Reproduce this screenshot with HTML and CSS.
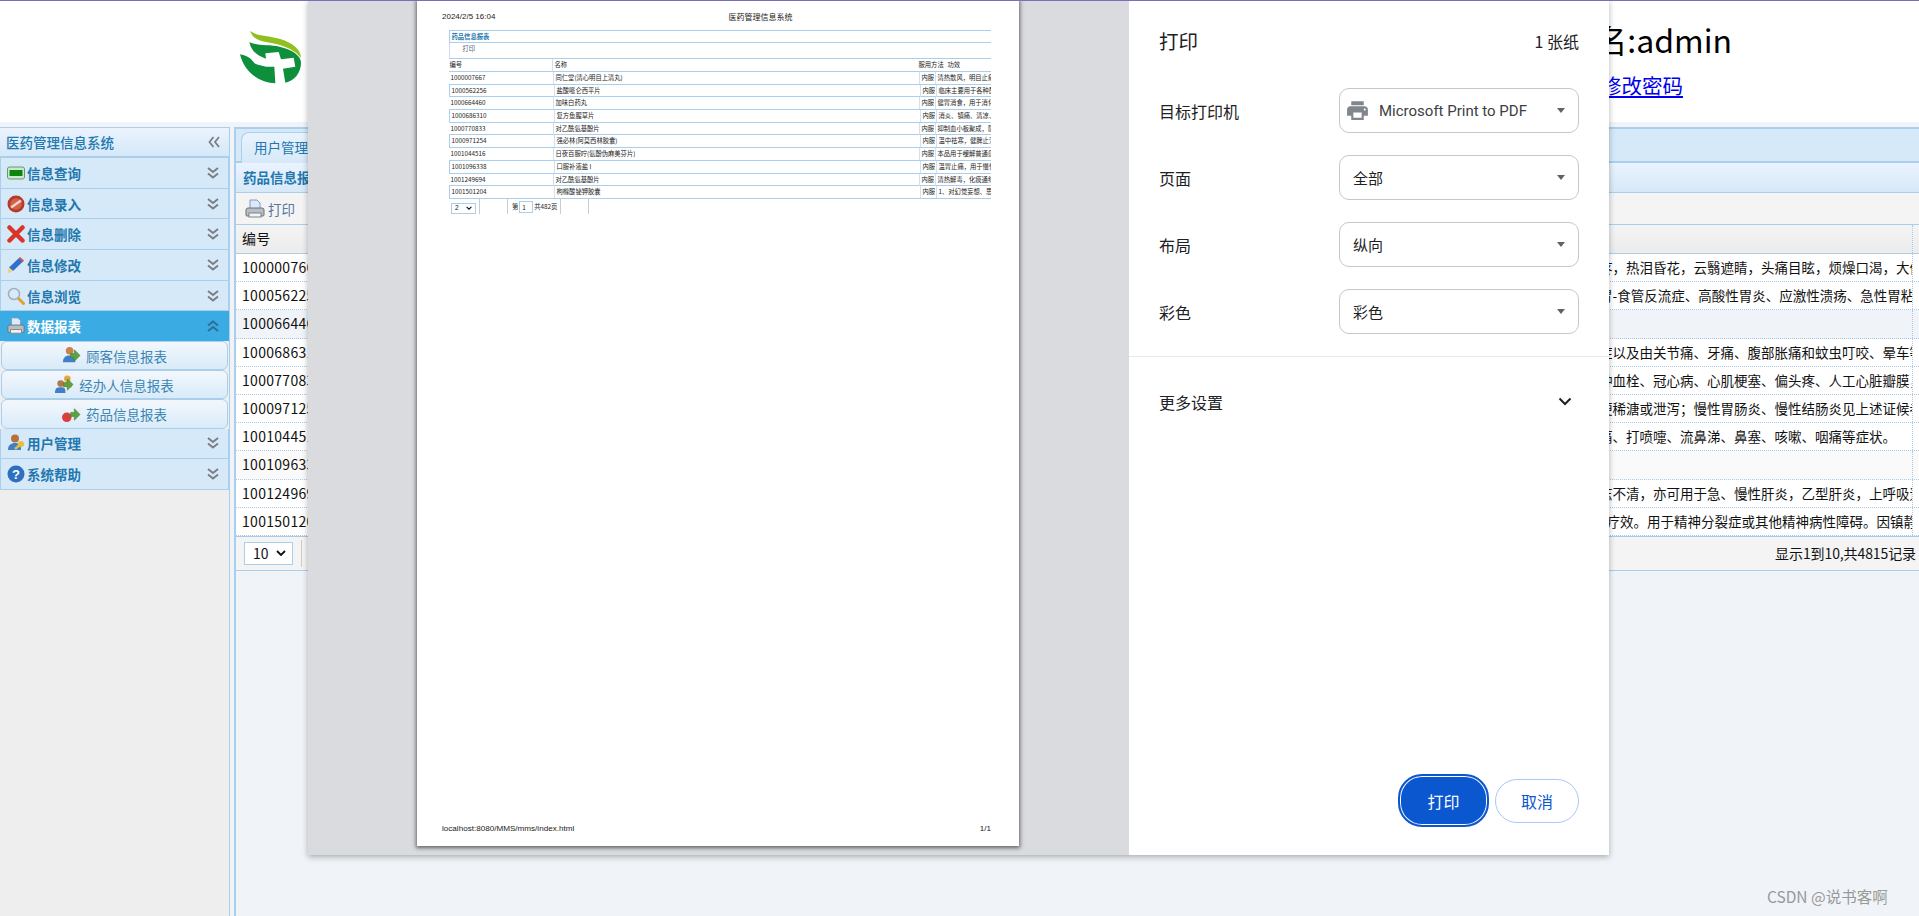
FILE: index.html
```html
<!DOCTYPE html>
<html lang="zh-CN">
<head>
<meta charset="utf-8">
<title>医药管理信息系统</title>
<link rel="stylesheet" href="styles.css">
</head>
<body>
<svg class="defs" width="0" height="0" aria-hidden="true">
  <defs>
    <symbol id="dbl-down" viewBox="0 0 12 12"><path d="M1 1l5 4 5-4M1 6.500l5 4 5-4" fill="none" stroke="#7a7f85" stroke-width="2"/></symbol>
    <symbol id="dbl-up" viewBox="0 0 12 12"><path d="M1 5.500l5-4 5 4M1 11l5-4 5 4" fill="none" stroke="#2c6f95" stroke-width="2"/></symbol>
    <symbol id="dbl-left" viewBox="0 0 12 12"><path d="M5.500 1l-4 5 4 5M11 1L7 6l4 5" fill="none" stroke="#7a7f85" stroke-width="1.800"/></symbol>
    <symbol id="printer" viewBox="0 0 20 20"><path d="M5 1h7l3 3v6H5z" fill="#dbe9f8" stroke="#7e9cc4"/><path d="M3 9h14a2 2 0 0 1 2 2v5a1 1 0 0 1-1 1H2a1 1 0 0 1-1-1v-5a2 2 0 0 1 2-2z" fill="#b9bdc4" stroke="#6d7278"/><rect x="4" y="14" width="12" height="4" fill="#f3f4f6" stroke="#7f8389"/></symbol>
    <symbol id="arrow" viewBox="0 0 20 20"><path d="M9 8h4V4l6 6-6 6v-4H9z" fill="#5da144" stroke="#3f7f2c" stroke-width=".6"/></symbol>
  </defs>
</svg>

<header class="site-head">
  <svg class="logo" viewBox="0 0 216 192" aria-hidden="true">
    <path d="M42 14C60 30 95 28 130 38c40 12 65 32 65 58C180 75 150 60 110 52 80 47 52 44 42 14z" fill="#8fc01e"/>
    <path d="M40 48c20 12 60 7 90 14 40 8 65 28 65 48 0 30-20 55-47 60l-7-42 37-6-5-27-38 5-7-22-40 4 2 16C65 90 45 75 40 48z" fill="#0d8f3c"/>
    <path d="M12 85c18 3 30 10 38 20 10 13 12 10 40 17l25 0 3 50C70 170 25 140 12 85z" fill="#0d8f3c"/>
  </svg>
  <div class="user-box">
    <div class="user-name">用户名:admin</div>
    <a class="user-link" href="#">修改密码</a>
  </div>
</header>

<div class="workspace">
  <aside class="side">
    <div class="side-title"><span>医药管理信息系统</span><svg class="chev"><use href="#dbl-left"/></svg></div>
    <div class="nav-row">
      <svg class="nav-ico" viewBox="0 0 18 18"><rect x=".5" y="3" width="17" height="12" rx="2" fill="#cfe6d0" stroke="#5c9c6c"/><rect x="2.500" y="6" width="13" height="6" fill="#0a860f"/></svg>
      <span>信息查询</span><svg class="chev"><use href="#dbl-down"/></svg>
    </div>
    <div class="nav-row">
      <svg class="nav-ico" viewBox="0 0 18 18"><circle cx="9" cy="9" r="8.500" fill="#b53a28"/><circle cx="9" cy="9" r="5.800" fill="#d2614c"/><path d="M4 12.500L14 5.500" stroke="#f3d3cb" stroke-width="2.500"/></svg>
      <span>信息录入</span><svg class="chev"><use href="#dbl-down"/></svg>
    </div>
    <div class="nav-row">
      <svg class="nav-ico" viewBox="0 0 18 18"><path d="M2.500 2.500l13 13M15.500 2.500l-13 13" stroke="#d9362b" stroke-width="4.500" stroke-linecap="round"/></svg>
      <span>信息删除</span><svg class="chev"><use href="#dbl-down"/></svg>
    </div>
    <div class="nav-row">
      <svg class="nav-ico" viewBox="0 0 18 18"><path d="M12.500 1.500l4 3.500L6 15l-4-3.500z" fill="#2f6fd0"/><path d="M13 1l4 3.500-1.500 1.500-4-3.500z" fill="#d9534a"/><path d="M2 11.500L6 15l-5.500 2.500z" fill="#f2cf7a"/></svg>
      <span>信息修改</span><svg class="chev"><use href="#dbl-down"/></svg>
    </div>
    <div class="nav-row">
      <svg class="nav-ico" viewBox="0 0 18 18"><path d="M10.500 10.500l6 6" stroke="#e0a030" stroke-width="3" stroke-linecap="round"/><circle cx="7" cy="7" r="5.500" fill="#d8ebfa" stroke="#a5aeb8" stroke-width="1.500"/></svg>
      <span>信息浏览</span><svg class="chev"><use href="#dbl-down"/></svg>
    </div>
    <div class="nav-row nav-active">
      <svg class="nav-ico"><use href="#printer"/></svg>
      <span>数据报表</span><svg class="chev"><use href="#dbl-up"/></svg>
    </div>
    <a class="sub-row"><svg class="sub-ico" viewBox="0 0 20 20"><circle cx="8" cy="5" r="4" fill="#c9824a"/><path d="M1 17c0-5 3-7 7-7s6 2 6 7z" fill="#3f7fc8"/><use href="#arrow"/></svg><span>顾客信息报表</span></a>
    <a class="sub-row"><svg class="sub-ico" viewBox="0 0 20 20"><circle cx="13" cy="4" r="3.500" fill="#e5a93f"/><path d="M8 13c0-4 2-5 5-5s5 1 5 5z" fill="#e5a93f"/><circle cx="6" cy="9" r="3.500" fill="#b9744a"/><path d="M0 19c0-5 2-6 6-6s5 1 5 6z" fill="#3f7fc8"/><use href="#arrow"/></svg><span>经办人信息报表</span></a>
    <a class="sub-row"><svg class="sub-ico" viewBox="0 0 20 20"><path d="M6 9l7-6a4 4 0 0 1 5 6l-7 6z" fill="#eceff2"/><circle cx="5" cy="13" r="5" fill="#dc3d3d"/><use href="#arrow"/></svg><span>药品信息报表</span></a>
    <div class="nav-row">
      <svg class="nav-ico" viewBox="0 0 18 18"><circle cx="8" cy="4.500" r="4" fill="#b8703c"/><path d="M1 16c0-5 3-7 7-7s6 2 6 7z" fill="#3f7fc8"/><path d="M8 15l6-5" stroke="#e9bc3c" stroke-width="2.500"/><circle cx="14" cy="10" r="3" fill="#e9bc3c"/></svg>
      <span>用户管理</span><svg class="chev"><use href="#dbl-down"/></svg>
    </div>
    <div class="nav-row">
      <svg class="nav-ico" viewBox="0 0 18 18"><circle cx="9" cy="9" r="8.500" fill="#2f6fc0"/><text x="9" y="14" text-anchor="middle" class="help-mark">?</text></svg>
      <span>系统帮助</span><svg class="chev"><use href="#dbl-down"/></svg>
    </div>
  </aside>

  <main class="main">
    <div class="tabs"><div class="tab">用户管理</div></div>
    <div class="panel-title">药品信息报表</div>
    <div class="toolbar"><svg class="tool-ico"><use href="#printer"/></svg><span>打印</span></div>
    <div class="dt-row dt-head"><div>编号</div><div>名称</div><div>服用方法</div><div>功效</div></div>
    <div class="dt-row"><div>1000007667</div><div>同仁堂(清心明目上清丸)</div><div>内服</div><div>清热散风，明目止痛。用于风热上攻，目赤疼，热泪昏花，云翳遮睛，头痛目眩，烦燥口渴，大便秘结</div></div>
    <div class="dt-row"><div>1000562256</div><div>盐酸哌仑西平片</div><div>内服</div><div>临床主要用于治疗各种酸相关性疾病，例如胃-食管反流症、高酸性胃炎、应激性溃疡、急性胃粘膜损伤</div></div>
    <div class="dt-row dt-tint"><div>1000664460</div><div>加味白药丸</div><div>内服</div><div>健胃消食，用于消化不良。</div></div>
    <div class="dt-row"><div>1000686310</div><div>复方鱼腥草片</div><div>内服</div><div>消炎、镇痛、清凉、止痒。用于感冒头痛等症以及由关节痛、牙痛、腹部胀痛和蚊虫叮咬、晕车等引起的不适</div></div>
    <div class="dt-row"><div>1000770833</div><div>对乙酰氨基酚片</div><div>内服</div><div>抑制血小板聚集，防治动脉粥样硬化及其各种血栓、冠心病、心肌梗塞、偏头疼、人工心脏瓣膜，</div></div>
    <div class="dt-row"><div>1000971254</div><div>强必林(阿莫西林胶囊)</div><div>内服</div><div>温中祛寒，健脾止泻。用于脾胃虚寒所致大便稀溏或泄泻；慢性胃肠炎、慢性结肠炎见上述证候者</div></div>
    <div class="dt-row"><div>1001044516</div><div>日夜百服咛(氨酚伪麻美芬片)</div><div>内服</div><div>本品用于缓解普通感冒或流行性感冒引起头痛、打喷嚏、流鼻涕、鼻塞、咳嗽、咽痛等症状。</div></div>
    <div class="dt-row dt-pale"><div>1001096338</div><div>口服补液盐 I</div><div>内服</div><div>温胃止痛，用于慢性胃炎。</div></div>
    <div class="dt-row"><div>1001249694</div><div>对乙酰氨基酚片</div><div>内服</div><div>清热解毒，化痰通络。用于热病痰热内扰神志不清，亦可用于急、慢性肝炎，乙型肝炎，上呼吸道感染</div></div>
    <div class="dt-row"><div>1001501204</div><div>枸橼酸铋钾胶囊</div><div>内服</div><div>1、对幻觉妄想、思维障碍、情感淡漠等有良疗效。用于精神分裂症或其他精神病性障碍。因镇静作用</div></div>
    <div class="pager">
      <div class="page-size"><span>10</span><svg class="size-caret" viewBox="0 0 10 6"><path d="M1 1l4 4 4-4" fill="none" stroke="#111" stroke-width="1.800"/></svg></div>
      <div class="pager-sep"></div>
      <div class="pager-info">显示1到10,共4815记录</div>
    </div>
  </main>
</div>

<section class="print-dialog">
  <div class="preview">
    <div class="paper">
      <div class="paper-head"><span class="paper-date">2024/2/5 16:04</span><span class="paper-title">医药管理信息系统</span></div>
      <div class="pt">
        <div class="pt-title">药品信息报表</div>
        <div class="pt-tool"><span>打印</span></div>
        <div class="pt-head"><span>编号</span><span>名称</span><span>服用方法</span><span>功效</span></div>
        <div class="pt-row"><span>1000007667</span><span>同仁堂(清心明目上清丸)</span><span>内服</span><span>清热散风，明目止痛</span></div>
        <div class="pt-row"><span>1000562256</span><span>盐酸哌仑西平片</span><span>内服</span><span>临床主要用于各种酸</span></div>
        <div class="pt-row"><span>1000664460</span><span>加味白药丸</span><span>内服</span><span>健胃消食，用于消化</span></div>
        <div class="pt-row"><span>1000686310</span><span>复方鱼腥草片</span><span>内服</span><span>消炎、镇痛、清凉、</span></div>
        <div class="pt-row"><span>1000770833</span><span>对乙酰氨基酚片</span><span>内服</span><span>抑制血小板聚成，防</span></div>
        <div class="pt-row"><span>1000971254</span><span>强必林(阿莫西林胶囊)</span><span>内服</span><span>温中祛寒，健脾止泻</span></div>
        <div class="pt-row"><span>1001044516</span><span>日夜百服咛(氨酚伪麻美芬片)</span><span>内服</span><span>本品用于缓解普通感</span></div>
        <div class="pt-row"><span>1001096338</span><span>口服补液盐 I</span><span>内服</span><span>温胃止痛，用于慢性</span></div>
        <div class="pt-row"><span>1001249694</span><span>对乙酰氨基酚片</span><span>内服</span><span>清热解毒，化痰通络</span></div>
        <div class="pt-row"><span>1001501204</span><span>枸橼酸铋钾胶囊</span><span>内服</span><span>1、对幻觉妄想、思维</span></div>
        <div class="pt-foot">
          <div class="pt-size"><span>2</span><svg class="pt-caret" viewBox="0 0 10 6"><path d="M1 1l4 4 4-4" fill="none" stroke="#111" stroke-width="1.800"/></svg></div>
          <div class="pt-cell"></div>
          <div class="pt-pageno"><span>第</span><span class="pt-input">1</span><span>共482页</span></div>
          <div class="pt-cell"></div>
        </div>
      </div>
      <div class="paper-foot"><span>localhost:8080/MMS/mms/index.html</span><span>1/1</span></div>
    </div>
  </div>
  <div class="settings">
    <div class="set-head"><span class="set-title">打印</span><span class="set-count">1 张纸</span></div>
    <div class="set-row"><span>目标打印机</span>
      <div class="set-select">
        <svg class="printer-ico" viewBox="0 0 24 24"><path d="M19 8H5c-1.660 0-3 1.340-3 3v6h4v4h12v-4h4v-6c0-1.660-1.340-3-3-3zm-3 11H8v-5h8v5zm3-7c-.55 0-1-.45-1-1s.45-1 1-1 1 .45 1 1-.45 1-1 1zm-1-9H6v4h12V3z" fill="#80868b"/></svg>
        <span class="printer-name">Microsoft Print to PDF</span><i class="caret"></i>
      </div>
    </div>
    <div class="set-row"><span>页面</span><div class="set-select"><span>全部</span><i class="caret"></i></div></div>
    <div class="set-row"><span>布局</span><div class="set-select"><span>纵向</span><i class="caret"></i></div></div>
    <div class="set-row"><span>彩色</span><div class="set-select"><span>彩色</span><i class="caret"></i></div></div>
    <div class="more"><span>更多设置</span><svg class="more-ico" viewBox="0 0 14 9"><path d="M1.500 1.500L7 7l5.500-5.500" fill="none" stroke="#202124" stroke-width="2"/></svg></div>
    <div class="actions"><button class="btn-print">打印</button><button class="btn-cancel">取消</button></div>
  </div>
</section>

<div class="watermark">CSDN @说书客啊</div>
</body>
</html>
```

FILE: styles.css
```css
* { box-sizing: border-box; }
html, body { margin: 0; height: 100%; }
body {
  height: 916px;
  overflow: hidden;
  position: relative;
  display: flex;
  flex-direction: column;
  background: #f0f4f8;
  border-top: 1px solid #7e6bc0;
  font-family: "Noto Sans CJK SC", "Noto Sans", sans-serif;
  font-size: 13.5px;
  color: #111;
}
.defs { position: absolute; }

/* site header */
.site-head {
  flex: none;
  height: 121px;
  background: #fff;
  display: flex;
  justify-content: space-between;
  padding: 25px 187px 0 236px;
}
.logo { width: 72px; height: 64px; }
.user-box { margin-top: -10px; display: flex; flex-direction: column; align-items: flex-end; }
.user-name { font-size: 32px; line-height: 46px; color: #000; }
.user-link { font-size: 20.5px; line-height: 30px; margin: 8px 49px 0 0; color: #00e; text-decoration: underline; }

/* workspace */
.workspace { flex: none; height: 789px; margin-top: 5px; display: flex; }
.side {
  width: 230px;
  flex: none;
  background: #eee;
  border-right: 1px solid #abcfeb;
}
.side-title {
  height: 31px;
  display: flex;
  align-items: center;
  justify-content: space-between;
  padding: 0 9px 0 6px;
  background: linear-gradient(#eaf3fe, #d5e8f8);
  border-top: 1px solid #abcfeb;
  border-bottom: 2px solid #abcfeb;
  font-weight: 500;
  color: #2277ae;
}
.chev { width: 12px; height: 12px; flex: none; }
.nav-row {
  height: 30.7px;
  display: flex;
  align-items: center;
  padding: 0 9px 0 6px;
  background: #d6e9f8;
  border-left: 1px solid #abcfeb;
  border-right: 1px solid #abcfeb;
  border-bottom: 1px solid #abcfeb;
  font-weight: 700;
  color: #2277ae;
}
.nav-row span { flex: 1; margin-left: 2px; }
.nav-ico { width: 18px; height: 18px; flex: none; }
.nav-active { height: 29.600px; background: #3babe3; color: #fff; border-color: #3babe3; }
.sub-row {
  height: 29.200px;
  margin: 0 1px;
  display: flex;
  align-items: center;
  justify-content: center;
  gap: 5px;
  background: linear-gradient(#f3f7fc, #d9ebf9);
  border: 1px solid #abcfeb;
  border-radius: 6px;
  color: #3b86b3;
}
.sub-ico { width: 19px; height: 19px; flex: none; }

/* main panel */
.main { flex: 1; min-width: 0; margin-left: 4px; border-left: 2px solid #abcfeb; align-self: stretch; }
.tabs {
  height: 36px;
  padding: 3px 0 0 5px;
  background: #d6e9f8;
  border-top: 2px solid #abcfeb;
  border-bottom: 2px solid #abcfeb;
}
.tab {
  width: 90px;
  height: 31px;
  padding: 4px 0 0 12px;
  border-radius: 8px 0 0 0;
  background: linear-gradient(#eaf3fe, #d6e9f8);
  border: 1px solid #abcfeb;
  border-bottom: 0;
  color: #2277ae;
}
.panel-title {
  height: 30px;
  padding: 4px 0 0 7px;
  background: linear-gradient(#eaf3fe, #d6e9f8);
  border-bottom: 1px solid #abcfeb;
  font-weight: 700;
  color: #2277ae;
}
.toolbar {
  height: 32px;
  display: flex;
  align-items: center;
  gap: 3px;
  padding-left: 9px;
  background: #f4f4f4;
  border-bottom: 1px solid #abcfeb;
  color: #55799c;
}
.tool-ico { width: 20px; height: 20px; }
.dt-row {
  height: 28.200px;
  display: grid;
  grid-template-columns: 229px 810px 63.500px 1fr;
  padding-right: 6px;
  background: #fff;
  border-bottom: 1px dotted #a9c9e6;
  line-height: 27px;
}
.dt-row > div { padding: 0 4px; overflow: hidden; white-space: nowrap; }
.dt-row > div:first-child { padding-left: 6px; font-size: 14px; letter-spacing: .3px; }
.dt-row > div:last-child { border-right: 1px dotted #a9c9e6; }
.dt-head {
  height: 29px;
  background: linear-gradient(#f4f4f4, #ececec);
  border-bottom: 1px solid #abcfeb;
}
.dt-tint { background: #f0f4f8; }
.dt-pale { background: #fafafa; }
.pager {
  height: 35px;
  display: flex;
  align-items: center;
  padding: 0 3px 0 8px;
  background: #f4f4f4;
  border-top: 1px solid #a9c9e6;
  border-bottom: 1px solid #abcfeb;
}
.page-size {
  width: 49px;
  height: 23px;
  display: flex;
  align-items: center;
  gap: 7px;
  padding-left: 8px;
  background: #fff;
  border: 1px solid #abcfeb;
  font-size: 14px;
}
.size-caret { width: 10px; height: 6px; }
.pager-sep { width: 1px; height: 27px; margin-left: 8px; background: #ccc; }
.pager-info { margin-left: auto; font-size: 14px; letter-spacing: -.1px; }

/* print dialog */
.print-dialog {
  position: absolute;
  left: 308px;
  top: -1px;
  width: 1301px;
  height: 855px;
  display: flex;
  box-shadow: 0 2px 6px rgba(0, 0, 0, .3);
}
.preview {
  width: 821px;
  flex: none;
  background: #dadbdf;
  padding-left: 109px;
}
.paper {
  width: 602px;
  height: 846px;
  background: #fff;
  box-shadow: 0 1px 4px 1px rgba(0, 0, 0, .55);
  padding: 12px 28px 0 25px;
  display: flex;
  flex-direction: column;
  color: #222;
}
.paper-head { height: 18px; font-size: 8px; line-height: 10px; display: flex; }
.paper-date { font-family: "Liberation Sans", sans-serif; }
.paper-title { margin-left: 233px; }
.pt { margin-left: 6.500px; font-size: 6.300px; line-height: 12px; overflow: hidden; }
.pt-title { height: 13px; border: 1px solid #abcfeb; border-right: 0; padding-left: 2px; color: #2277ae; font-weight: 700; }
.pt-tool { height: 16px; padding-left: 13px; color: #557; border-left: 1px solid #d5d5f5; border-bottom: 1px solid #abcfeb; }
.pt-head, .pt-row {
  height: 12.700px;
  display: grid;
  border-bottom: 1px solid #abcfeb;
  white-space: nowrap;
}
.pt-head { grid-template-columns: 102px 367px 29px 1fr; height: 13px; padding-left: 1px; }
.pt-row { grid-template-columns: 102px 366px 16px 1fr; padding-left: 2px; }
.pt-row:nth-child(odd) { border-left: 1px solid #abcfeb; }
.pt-row span:nth-child(2), .pt-head span:nth-child(2), .pt-row span:nth-child(3), .pt-row span:nth-child(4) { padding-left: 2px; border-left: 1px solid #cfe2f3; }
.pt-foot { height: 15px; display: flex; align-items: flex-start; padding: 4px 0 0 2.500px; }
.pt-size { width: 25px; height: 11px; margin-right: 3px; display: flex; align-items: center; justify-content: space-between; padding: 0 3px; border: 1px solid #abcfeb; font-family: "Liberation Sans", sans-serif; font-size: 6.500px; }
.pt-caret { width: 6px; height: 4px; }
.pt-cell { width: 29px; height: 15px; margin-top: -4px; border-right: 1px solid #ccc; border-left: 1px solid #ccc; }
.pt-pageno { width: 52px; display: flex; padding-left: 4px; margin-top: -2px; line-height: 12px; }
.pt-input { width: 14px; height: 12px; padding-left: 2px; margin: 0 1px; border: 1px solid #abcfeb; flex: none; }
.paper-foot {
  margin-top: auto;
  height: 22px;
  display: flex;
  justify-content: space-between;
  font-family: "Liberation Sans", sans-serif;
  font-size: 8.100px;
  line-height: 10px;
}

.settings {
  flex: 1;
  background: #fff;
  display: flex;
  flex-direction: column;
  padding: 0 30px 28px;
  font-size: 16px;
  color: #202124;
}
.set-head { height: 88px; flex: none; display: flex; justify-content: space-between; align-items: center; padding-bottom: 7px; }
.set-title { font-size: 19.500px; }
.set-row { height: 45px; margin-bottom: 22.100px; flex: none; display: flex; justify-content: space-between; align-items: center; }
.set-select {
  width: 240px;
  height: 45px;
  display: flex;
  align-items: center;
  padding: 0 13px;
  border: 1px solid #c7c7c7;
  border-radius: 10px;
  font-size: 15px;
}
.set-select span { flex: 1; }
.printer-ico { width: 25px; height: 25px; margin: 0 9px 0 -8px; flex: none; }
.set-select .printer-name { font-family: Roboto, sans-serif; color: #3c4043; }
.caret {
  width: 0;
  height: 0;
  border-left: 4.500px solid transparent;
  border-right: 4.500px solid transparent;
  border-top: 5px solid #5f6368;
}
.more {
  height: 93px;
  margin: 0 -30px;
  padding: 0 37px 2px 30px;
  flex: none;
  display: flex;
  justify-content: space-between;
  align-items: center;
  border-top: 1px solid #e8e8e8;
}
.more-ico { width: 14px; height: 9px; margin-bottom: 2px; }
.actions { margin-top: auto; display: flex; align-items: center; justify-content: flex-end; gap: 6px; }
.btn-print, .btn-cancel { font: inherit; font-size: 16px; border-radius: 24px; padding: 0; }
.btn-print {
  width: 91px;
  height: 53px;
  color: #fff;
  background: #0b57d0;
  border: 2px solid #fff;
  outline: 2px solid #0b57d0;
  outline-offset: -2px;
  box-shadow: inset 0 0 0 1px #fff;
}
.btn-cancel { width: 84px; height: 44px; color: #0b57d0; background: #fff; border: 1px solid #a8c7fa; }

.watermark {
  position: absolute;
  left: 1767px;
  top: 885px;
  font-size: 15.500px;
  line-height: 20px;
  color: #999;
  white-space: nowrap;
}
.help-mark { font: 700 13px "Liberation Sans", sans-serif; fill: #fff; }
```
